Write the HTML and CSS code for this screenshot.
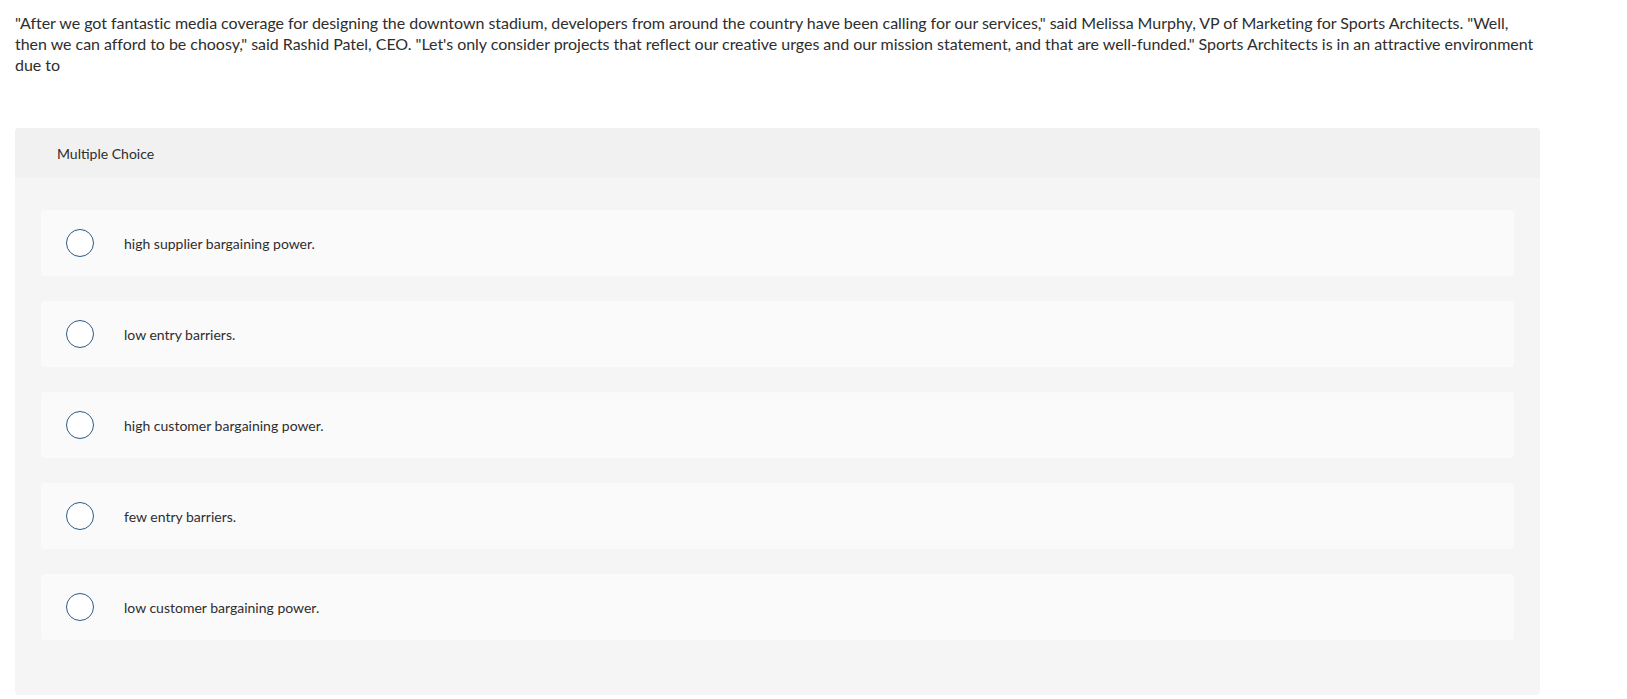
FILE: index.html
```html
<!DOCTYPE html>
<html>
<head>
<meta charset="utf-8">
<link rel="stylesheet" href="styles.css">
</head>
<body>
<div class="page">
  <p class="prompt">"After we got fantastic media coverage for designing the downtown stadium, developers from around the country have been calling for our services," said Melissa Murphy, VP of Marketing for Sports Architects. "Well, then we can afford to be choosy," said Rashid Patel, CEO. "Let's only consider projects that reflect our creative urges and our mission statement, and that are well-funded." Sports Architects is in an attractive environment due to</p>
  <section class="card">
    <header class="card-head">Multiple Choice</header>
    <div class="card-body">
      <label class="option"><span class="radio"></span><span class="opt-text">high supplier bargaining power.</span></label>
      <label class="option"><span class="radio"></span><span class="opt-text">low entry barriers.</span></label>
      <label class="option"><span class="radio"></span><span class="opt-text">high customer bargaining power.</span></label>
      <label class="option"><span class="radio"></span><span class="opt-text">few entry barriers.</span></label>
      <label class="option"><span class="radio"></span><span class="opt-text">low customer bargaining power.</span></label>
    </div>
  </section>
</div>
</body>
</html>
```
FILE: styles.css
```css
* { box-sizing: border-box; }
html, body { margin: 0; padding: 0; background: #fff; }
body {
  font-family: Lato, "Liberation Sans", sans-serif;
  color: #2e2e2e;
}
.page {
  width: 1525px;
  margin-left: 15px;
  padding-top: 12px;
}
.prompt {
  margin: 0;
  font-size: 16px;
  line-height: 21px;
  letter-spacing: -0.035px;
}
.card {
  margin-top: 53px;
  background: #f5f5f5;
  border-radius: 4px;
  overflow: hidden;
}
.card-head {
  height: 50px;
  background: #f1f1f1;
  display: flex;
  align-items: center;
  padding-left: 42px;
  font-size: 14px;
}
.card-body {
  display: flex;
  flex-direction: column;
  gap: 25px;
  padding: 32px 26px 55px 26px;
}
.option {
  height: 66px;
  background: #fafafa;
  border-radius: 4px;
  display: flex;
  align-items: center;
  padding-left: 25px;
  font-size: 14px;
}
.radio {
  width: 28px;
  height: 28px;
  border: 1.5px solid #2b5a88;
  border-radius: 50%;
  background: #fff;
  flex: none;
}
.opt-text {
  margin-left: 30px;
}
```
